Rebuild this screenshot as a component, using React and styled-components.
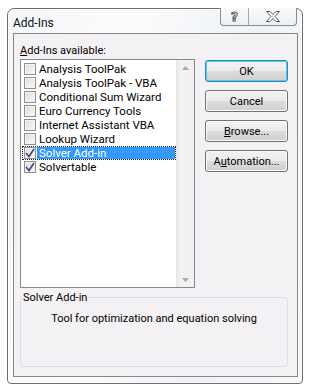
import React from "react";
import styled, { createGlobalStyle } from "styled-components";

const GlobalStyle = createGlobalStyle`
  html, body {
    margin: 0;
    padding: 0;
    background: #ffffff;
  }
  body {
    font-family: Roboto, "Liberation Sans", Arial, sans-serif;
    font-size: 11px;
    color: #000;
  }
`;

const addIns = [
  { name: "Analysis ToolPak", checked: false },
  { name: "Analysis ToolPak - VBA", checked: false },
  { name: "Conditional Sum Wizard", checked: false },
  { name: "Euro Currency Tools", checked: false },
  { name: "Internet Assistant VBA", checked: false },
  { name: "Lookup Wizard", checked: false },
  { name: "Solver Add-in", checked: true, selected: true },
  { name: "Solvertable", checked: true },
];

const Window = styled.div`
  margin: 8px 6px 7px 7px;
  width: 296px;
  height: 376px;
  box-sizing: border-box;
  border: 1px solid #6e6e6e;
  border-radius: 7px 7px 4px 4px;
  background: linear-gradient(100deg, #f3f6f9 0%, #fbfcfd 35%, #eef2f6 70%, #f6f8fa 100%);
  display: flex;
  flex-direction: column;
  box-shadow: inset 0 0 0 1px rgba(255, 255, 255, 0.8);
`;

const TitleBar = styled.div`
  height: 24px;
  display: flex;
  align-items: flex-start;
  justify-content: space-between;
  padding: 0 5px 0 5px;
`;

const Title = styled.div`
  font-size: 12px;
  line-height: 14px;
  margin-top: 7px;
  color: #111;
`;

const CaptionButtons = styled.div`
  display: flex;
  margin-top: -1px;
  border: 1px solid #8b8c8d;
  border-top: none;
  border-radius: 0 0 4px 4px;
  background: linear-gradient(#fbfbfb, #eceef0);
  height: 17px;
`;

const CaptionButton = styled.div`
  width: ${(p) => p.$w}px;
  display: flex;
  align-items: center;
  justify-content: center;
  & + & {
    border-left: 1px solid #a7a8a9;
  }
`;

const HelpGlyph = styled.span`
  font-family: "DejaVu Sans", sans-serif;
  font-weight: bold;
  font-size: 12px;
  line-height: 12px;
  color: #fff;
  -webkit-text-stroke: 1px #555;
`;

const Client = styled.div`
  flex: 1;
  margin: 0 4px 6px 5px;
  border: 1px solid #888888;
  background: #f4f1f4;
  padding: 10px 9px 8px 6px;
  display: flex;
  flex-direction: column;
`;

const TopArea = styled.div`
  display: flex;
  gap: 10px;
`;

const ListColumn = styled.div`
  width: 175px;
  display: flex;
  flex-direction: column;
`;

const Label = styled.div`
  line-height: 13px;
  margin-bottom: 2px;
  u {
    text-decoration: underline;
  }
`;

const ListBox = styled.div`
  height: 229px;
  box-sizing: border-box;
  border: 1px solid #828790;
  background: #fff;
  display: flex;
`;

const Items = styled.div`
  flex: 1;
  padding-top: 2px;
`;

const Row = styled.div`
  height: 14px;
  box-sizing: border-box;
  margin-left: 1px;
  padding-left: 1px;
  display: flex;
  align-items: center;
  border: 1px dotted ${(p) => (p.$focus ? "#222" : "transparent")};
`;

const Check = styled.span`
  width: 12px;
  height: 12px;
  box-sizing: border-box;
  border: 1px solid #8e8f8f;
  background: linear-gradient(135deg, #dcdcdc, #fafafa);
  box-shadow: inset 0 0 0 1px #f4f4f4;
  display: flex;
  align-items: center;
  justify-content: center;
  flex-shrink: 0;
`;

const ItemText = styled.span`
  flex: 1;
  margin-left: 1px;
  padding-left: 2px;
  height: 12px;
  line-height: 12px;
  font-size: 11.5px;
  white-space: nowrap;
  background: ${(p) => (p.$selected ? "#3399ff" : "transparent")};
  color: ${(p) => (p.$selected ? "#fff" : "#000")};
`;

const ScrollBar = styled.div`
  width: 17px;
  border-left: 1px solid #e6e6e6;
  background: linear-gradient(90deg, #e9e9e9 0%, #f3f3f3 25%, #f0f0f0 100%);
  display: flex;
  flex-direction: column;
  justify-content: space-between;
  align-items: center;
  padding: 6px 0 5px;
`;

const ButtonColumn = styled.div`
  width: 83px;
  display: flex;
  flex-direction: column;
  gap: 8px;
  margin-top: 16px;
`;

const Button = styled.div`
  height: 22px;
  box-sizing: border-box;
  border: 1px solid ${(p) => (p.$default ? "#3c7fb1" : "#707070")};
  border-radius: 3px;
  background: linear-gradient(#f2f2f2 0%, #ebebeb 50%, #dddddd 50%, #cfcfcf 100%);
  box-shadow: inset 0 0 0 1px ${(p) => (p.$default ? "#48d0f8" : "#fcfcfc")};
  display: flex;
  align-items: center;
  justify-content: center;
  u {
    text-decoration: underline;
  }
`;

const GroupBox = styled.fieldset`
  margin: 3px 0 0 0;
  padding: 8px 0 0 0;
  height: 76px;
  box-sizing: border-box;
  border: 1px solid #d5dfe5;
  border-radius: 3px;
  text-align: center;
  line-height: 13px;
  legend {
    text-align: left;
    padding: 0 1px;
    margin-left: 1px;
    line-height: 13px;
  }
`;

function CheckMark() {
  return (
    <svg width="10" height="10" viewBox="0 0 10 10">
      <path d="M1 5 L4 8.5 L9 1" fill="none" stroke="#3e4f80" strokeWidth="1.7" />
    </svg>
  );
}

function Arrow({ up }) {
  return (
    <svg width="7" height="4" viewBox="0 0 7 4">
      <path d={up ? "M0 4 L3.5 0 L7 4 Z" : "M0 0 L3.5 4 L7 0 Z"} fill="#a9a9a9" />
    </svg>
  );
}

function CloseGlyph() {
  return (
    <svg width="14" height="11" viewBox="0 0 14 11">
      <path
        d="M0.5 0.5 H4 L7 3.5 L10 0.5 H13.5 L9 5.5 L13.5 10.5 H10 L7 7.5 L4 10.5 H0.5 L5 5.5 Z"
        fill="#fff"
        stroke="#5c5c5c"
        strokeWidth="1"
      />
    </svg>
  );
}

export default function App() {
  return (
    <>
      <GlobalStyle />
      <Window>
        <TitleBar>
          <Title>Add-Ins</Title>
          <CaptionButtons>
            <CaptionButton $w={27}>
              <HelpGlyph>?</HelpGlyph>
            </CaptionButton>
            <CaptionButton $w={47}>
              <CloseGlyph />
            </CaptionButton>
          </CaptionButtons>
        </TitleBar>
        <Client>
          <TopArea>
            <ListColumn>
              <Label>
                <u>A</u>dd-Ins available:
              </Label>
              <ListBox>
                <Items>
                  {addIns.map((item) => (
                    <Row key={item.name} $focus={item.selected}>
                      <Check>{item.checked && <CheckMark />}</Check>
                      <ItemText $selected={item.selected}>{item.name}</ItemText>
                    </Row>
                  ))}
                </Items>
                <ScrollBar>
                  <Arrow up />
                  <Arrow />
                </ScrollBar>
              </ListBox>
            </ListColumn>
            <ButtonColumn>
              <Button $default>OK</Button>
              <Button>Cancel</Button>
              <Button>
                <span>
                  <u>B</u>rowse...
                </span>
              </Button>
              <Button>
                <span>
                  A<u>u</u>tomation...
                </span>
              </Button>
            </ButtonColumn>
          </TopArea>
          <GroupBox>
            <legend>Solver Add-in</legend>
            Tool for optimization and equation solving
          </GroupBox>
        </Client>
      </Window>
    </>
  );
}
